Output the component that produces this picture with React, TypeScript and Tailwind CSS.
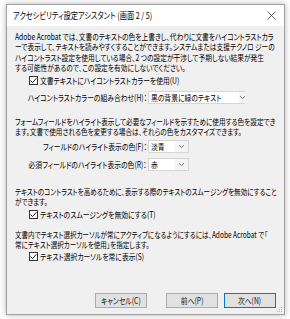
import React from "react";

const font = "font-['Noto_Sans_CJK_JP','Noto_Sans',sans-serif] [font-feature-settings:'palt']";

function Check() {
  return (
    <span className="w-[9px] h-[9px] border border-[#333] bg-white flex items-center justify-center shrink-0">
      <svg width="7" height="7" viewBox="0 0 7 7">
        <path d="M0.6 3.6 L2.6 5.6 L6.4 1.2" fill="none" stroke="#222" strokeWidth="1" />
      </svg>
    </span>
  );
}

function Chevron() {
  return (
    <svg width="7" height="5" viewBox="0 0 7 5">
      <path d="M1 1.2 L3.5 3.6 L6 1.2" fill="none" stroke="#666" strokeWidth="0.9" />
    </svg>
  );
}

function Select({ text, w }: { text: string; w: string }) {
  return (
    <div className={`h-[13px] ${w} bg-white border border-[#d6d6d6] flex items-center shrink-0`}>
      <span className="flex-1 pl-[2px] leading-none text-black whitespace-nowrap">
        <span className="inline-block origin-left scale-x-[0.8]">{text}</span>
      </span>
      <span className="w-[13px] h-full flex items-center justify-center bg-[#f4f4f4]">
        <Chevron />
      </span>
    </div>
  );
}

function Btn({ label, def }: { label: string; def?: boolean }) {
  return (
    <div
      className={`w-[52px] h-[15px] flex items-center justify-center bg-[#e1e1e1] border leading-none text-[#111] ${
        def ? "border-[#0078d7]" : "border-[#adadad]"
      }`}
    >
      <span className="inline-block scale-x-[0.8] whitespace-nowrap">{label}</span>
    </div>
  );
}

function L({ children, s = "scale-x-[0.79]" }: { children: React.ReactNode; s?: string }) {
  return (
    <div className="whitespace-nowrap">
      <span className={`inline-block origin-left ${s}`}>{children}</span>
    </div>
  );
}

function Label({ children }: { children: React.ReactNode }) {
  return (
    <div className="w-[133px] flex justify-end pr-[1px] whitespace-nowrap leading-none">
      <span className="inline-block shrink-0 origin-right scale-x-[0.8]">{children}</span>
    </div>
  );
}

function CheckRow({ children, mt }: { children: React.ReactNode; mt: string }) {
  return (
    <div className={`${mt} ml-[14px] h-[10px] flex items-center gap-[2px] whitespace-nowrap`}>
      <Check />
      <span className="inline-block origin-left scale-x-[0.8] leading-none">{children}</span>
    </div>
  );
}

export default function App() {
  return (
    <div className={`w-[290px] h-[319px] bg-white pt-[4px] pl-[6px] text-[8.5px] overflow-hidden ${font}`}>
      <div className="relative w-[279px] h-[311px] border border-[#a0a0a0] bg-[#f0f0f0] flex flex-col shadow-[0_0_6px_rgba(0,0,0,0.3)]">
        <div className="h-[21px] bg-white flex items-center pl-[6px] pr-[6px] shrink-0">
          <span className="flex-1 text-[9px] leading-none text-black whitespace-nowrap">
            <span className="inline-block origin-left scale-x-[0.8]">アクセシビリティ設定アシスタント (画面 2 / 5)</span>
          </span>
          <svg width="9" height="9" viewBox="0 0 9 9" className="mr-[2px]">
            <path d="M0.5 0.5 L8.5 8.5 M8.5 0.5 L0.5 8.5" stroke="#333" strokeWidth="0.8" />
          </svg>
        </div>
        <div className="flex-1 flex flex-col pl-[8px] pr-[4px] pt-[5px] pb-[6px] text-black">
          <div className="leading-[10.4px]">
            <L>Adobe Acrobat では、文書のテキストの色を上書きし、代わりに文書をハイコントラストカラ</L>
            <L>ーで表示して、テキストを読みやすくすることができます。システムまたは支援テクノロ ジーの</L>
            <L>ハイコントラスト設定を使用している場合、2 つの設定が干渉して予期しない結果が発生</L>
            <L>する可能性があるので、この設定を有効にしないでください。</L>
          </div>
          <CheckRow mt="mt-[2.5px]">文書テキストにハイコントラストカラーを使用(U)</CheckRow>
          <div className="mt-[6px] flex items-center">
            <Label>ハイコントラストカラーの組み合わせ(H)：</Label>
            <Select text="黒の背景に緑のテキスト" w="w-[97px]" />
          </div>
          <div className="mt-[12px] leading-[10px]">
            <L s="scale-x-[0.78]">フォームフィールドをハイライト表示して必要なフィールドを示すために使用する色を設定でき</L>
            <L s="scale-x-[0.78]">ます。文書で使用される色を変更する場合は、それらの色をカスタマイズできます。</L>
          </div>
          <div className="mt-[4px] flex items-center">
            <Label>フィールドのハイライト表示の色(F)：</Label>
            <Select text="淡青" w="w-[41px]" />
          </div>
          <div className="mt-[5px] flex items-center">
            <Label>必須フィールドのハイライト表示の色(R)：</Label>
            <Select text="赤" w="w-[41px]" />
          </div>
          <div className="mt-[15px] leading-[10px]">
            <L s="scale-x-[0.77]">テキストのコントラストを高めるために、表示する際のテキストのスムージングを無効にすること</L>
            <L s="scale-x-[0.77]">ができます。</L>
          </div>
          <CheckRow mt="mt-[3px]">テキストのスムージングを無効にする(T)</CheckRow>
          <div className="mt-[10px] leading-[10px]">
            <L s="scale-x-[0.77]">文書内でテキスト選択カーソルが常にアクティブになるようにするには、Adobe Acrobat で「</L>
            <L s="scale-x-[0.77]">常にテキスト選択カーソルを使用」を指定します。</L>
          </div>
          <CheckRow mt="mt-[2px]">テキスト選択カーソルを常に表示(S)</CheckRow>
          <div className="mt-auto flex items-center">
            <div className="ml-[80px]">
              <Btn label="キャンセル(C)" />
            </div>
            <div className="ml-[19px]">
              <Btn label="前へ(P)" />
            </div>
            <div className="ml-[6px]">
              <Btn label="次へ(N)" def />
            </div>
          </div>
        </div>
        <svg width="6" height="6" viewBox="0 0 6 6" className="absolute right-[1px] bottom-[1px]">
          <rect x="4" y="0" width="1" height="1" fill="#b5b5b5" />
          <rect x="2" y="2" width="1" height="1" fill="#b5b5b5" />
          <rect x="4" y="2" width="1" height="1" fill="#b5b5b5" />
          <rect x="0" y="4" width="1" height="1" fill="#b5b5b5" />
          <rect x="2" y="4" width="1" height="1" fill="#b5b5b5" />
          <rect x="4" y="4" width="1" height="1" fill="#b5b5b5" />
        </svg>
      </div>
    </div>
  );
}
